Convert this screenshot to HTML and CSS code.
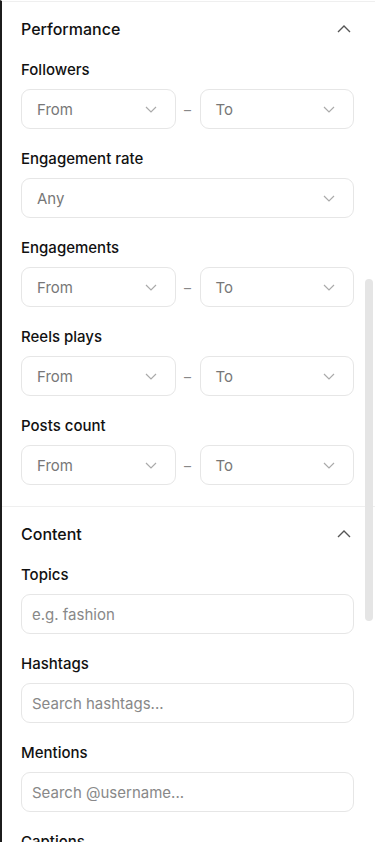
FILE: index.html
```html
<!DOCTYPE html>
<html lang="en">
<head>
    <meta charset="UTF-8">
    <meta name="viewport" content="width=device-width, initial-scale=1.0">
    <title>Filters</title>
    <link rel="stylesheet" href="styles.css">
</head>
<body>

    <div class="panel">
        <div class="section">
            <div class="section-head">
                <span>Performance</span>
                <svg class="chev-up" width="14" height="8" viewBox="0 0 14 8"><path d="M1 7 L7 1 L13 7" fill="none" stroke="#555" stroke-width="1.4"/></svg>
            </div>

            <div class="field">
                <label>Followers</label>
                <div class="range">
                    <div class="select"><span>From</span><svg width="12" height="7" viewBox="0 0 12 7"><path d="M1 1 L6 6 L11 1" fill="none" stroke="#aaa" stroke-width="1.2"/></svg></div>
                    <span class="dash">–</span>
                    <div class="select"><span>To</span><svg width="12" height="7" viewBox="0 0 12 7"><path d="M1 1 L6 6 L11 1" fill="none" stroke="#aaa" stroke-width="1.2"/></svg></div>
                </div>
            </div>

            <div class="field">
                <label>Engagement rate</label>
                <div class="select"><span>Any</span><svg width="12" height="7" viewBox="0 0 12 7"><path d="M1 1 L6 6 L11 1" fill="none" stroke="#aaa" stroke-width="1.2"/></svg></div>
            </div>

            <div class="field">
                <label>Engagements</label>
                <div class="range">
                    <div class="select"><span>From</span><svg width="12" height="7" viewBox="0 0 12 7"><path d="M1 1 L6 6 L11 1" fill="none" stroke="#aaa" stroke-width="1.2"/></svg></div>
                    <span class="dash">–</span>
                    <div class="select"><span>To</span><svg width="12" height="7" viewBox="0 0 12 7"><path d="M1 1 L6 6 L11 1" fill="none" stroke="#aaa" stroke-width="1.2"/></svg></div>
                </div>
            </div>

            <div class="field">
                <label>Reels plays</label>
                <div class="range">
                    <div class="select"><span>From</span><svg width="12" height="7" viewBox="0 0 12 7"><path d="M1 1 L6 6 L11 1" fill="none" stroke="#aaa" stroke-width="1.2"/></svg></div>
                    <span class="dash">–</span>
                    <div class="select"><span>To</span><svg width="12" height="7" viewBox="0 0 12 7"><path d="M1 1 L6 6 L11 1" fill="none" stroke="#aaa" stroke-width="1.2"/></svg></div>
                </div>
            </div>

            <div class="field">
                <label>Posts count</label>
                <div class="range">
                    <div class="select"><span>From</span><svg width="12" height="7" viewBox="0 0 12 7"><path d="M1 1 L6 6 L11 1" fill="none" stroke="#aaa" stroke-width="1.2"/></svg></div>
                    <span class="dash">–</span>
                    <div class="select"><span>To</span><svg width="12" height="7" viewBox="0 0 12 7"><path d="M1 1 L6 6 L11 1" fill="none" stroke="#aaa" stroke-width="1.2"/></svg></div>
                </div>
            </div>
        </div>

        <div class="section">
            <div class="section-head">
                <span>Content</span>
                <svg class="chev-up" width="14" height="8" viewBox="0 0 14 8"><path d="M1 7 L7 1 L13 7" fill="none" stroke="#555" stroke-width="1.4"/></svg>
            </div>

            <div class="field">
                <label for="topics">Topics</label>
                <input type="text" id="topics" placeholder="e.g. fashion">
            </div>

            <div class="field">
                <label for="hashtags">Hashtags</label>
                <input type="text" id="hashtags" placeholder="Search hashtags...">
            </div>

            <div class="field">
                <label for="mentions">Mentions</label>
                <input type="text" id="mentions" placeholder="Search @username...">
            </div>

            <div class="field">
                <label for="captions">Captions</label>
                <input type="text" id="captions" placeholder="Search captions...">
            </div>
        </div>

        <div class="scroll-thumb"></div>
    </div>

</body>
</html>
```

FILE: styles.css
```css
* {
    box-sizing: border-box;
}
html, body {
    margin: 0;
    padding: 0;
    height: 100%;
    overflow: hidden;
}
body {
    font-family: Inter, "Noto Sans", Arial, sans-serif;
    background-color: #fff;
    color: #111;
}
.panel {
    position: relative;
    height: 100%;
    border-left: 2px solid #1c1c1c;
    border-top: 1px solid #fff;
}
.section {
    border-top: 1px solid #efefef;
    padding: 16px 21px 21px 19px;
    display: flex;
    flex-direction: column;
    gap: 19px;
}
.section-head {
    display: flex;
    align-items: center;
    justify-content: space-between;
    height: 22px;
    font-size: 16px;
    font-weight: 500;
}
.chev-up {
    margin-right: 3px;
}
.field {
    display: flex;
    flex-direction: column;
    gap: 10px;
}
label {
    display: block;
    height: 20px;
    line-height: 22px;
    font-size: 15px;
    font-weight: 500;
    color: #111;
}
.range {
    display: flex;
    align-items: center;
}
.range .select {
    flex: 1;
}
.dash {
    width: 24px;
    text-align: center;
    color: #888;
    font-size: 14px;
}
.select {
    height: 40px;
    border: 1px solid #e6e6e6;
    border-radius: 9px;
    display: flex;
    align-items: center;
    justify-content: space-between;
    padding: 0 18px 0 15px;
    font-size: 15px;
    color: #777;
}
input {
    width: 100%;
    height: 40px;
    border: 1px solid #e6e6e6;
    border-radius: 9px;
    padding: 0 10px;
    font-family: inherit;
    font-size: 15px;
    color: #111;
    outline: none;
}
input::placeholder {
    color: #888;
}
.scroll-thumb {
    position: absolute;
    top: 278px;
    right: 2px;
    width: 8px;
    height: 342px;
    border-radius: 4px;
    background-color: #e5e5e5;
}
```
